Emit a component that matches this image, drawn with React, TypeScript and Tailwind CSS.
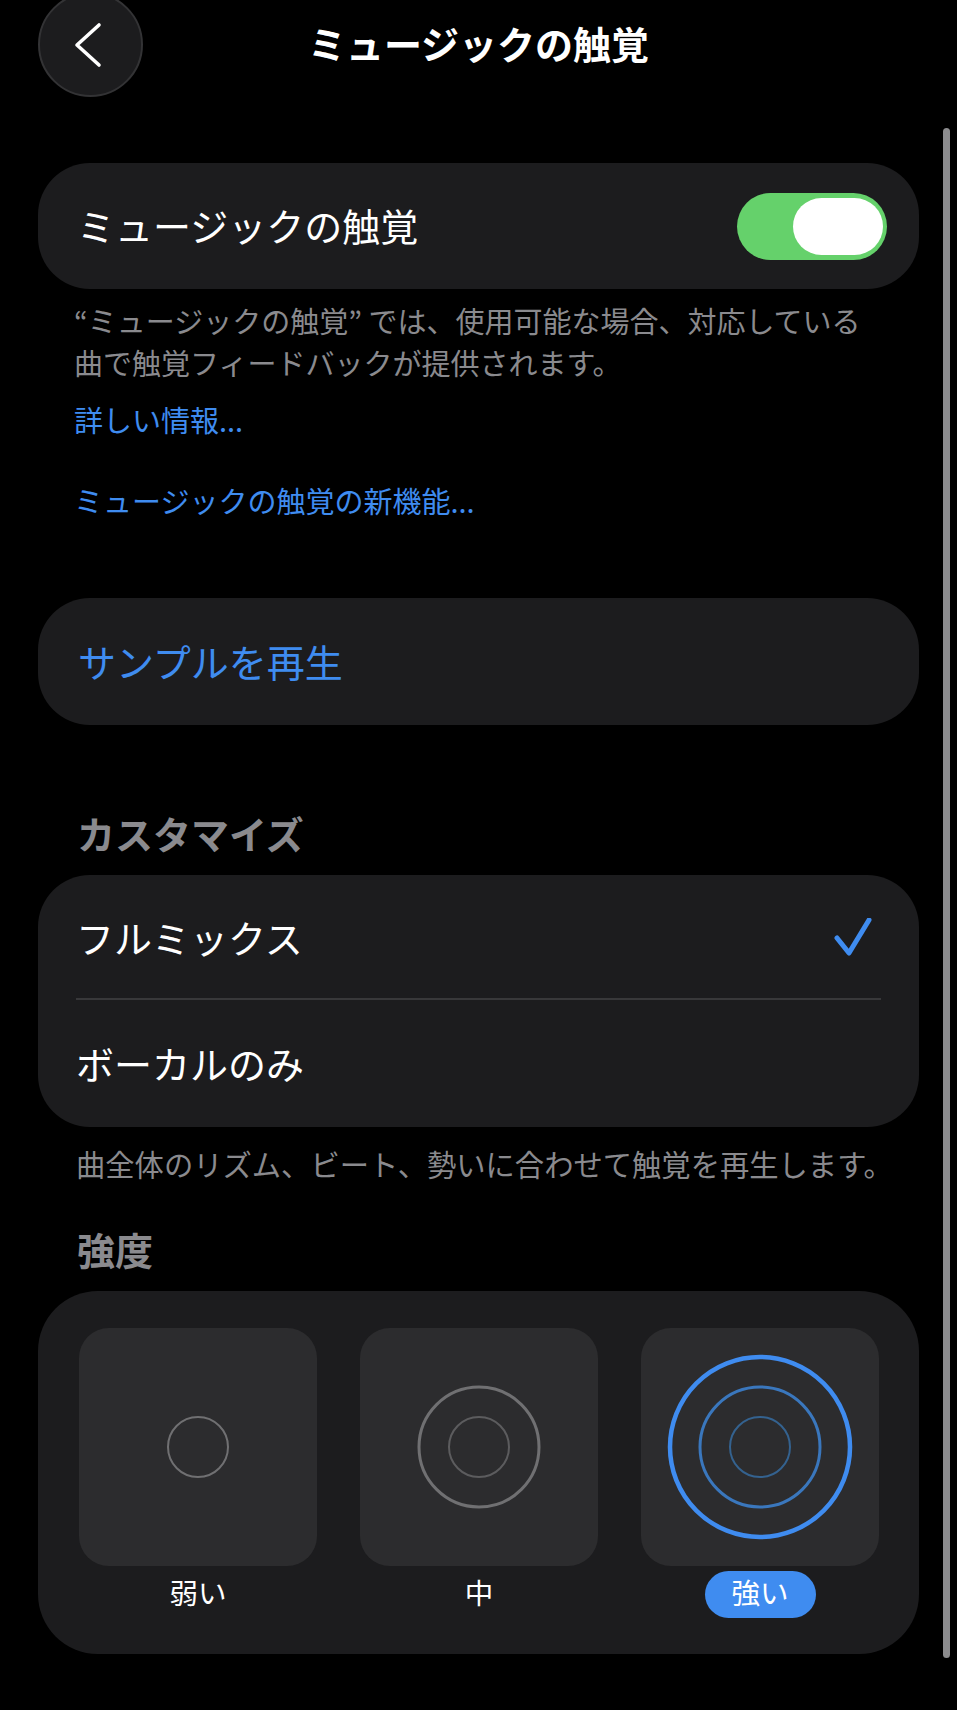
export default function App() {
  const sans = "font-['Noto_Sans_CJK_JP','Noto_Sans',sans-serif]";
  return (
    <div className={`relative h-[1710px] w-[957px] overflow-hidden bg-black px-[38px] text-white ${sans}`}>
      {/* scrollbar */}
      <div className="absolute left-[943px] top-[128px] h-[1530px] w-[7px] rounded-full bg-[#8c8c8e]" />

      {/* header */}
      <header className="relative -mt-[8px] flex h-[104px] items-center justify-center">
        <button className="absolute left-0 top-0 flex h-[105px] w-[105px] items-center justify-center rounded-full border-2 border-[#333335] bg-[#1c1c1e] pr-[5px]">
          <svg width="36" height="48" viewBox="0 0 36 48" fill="none">
            <path d="M30 4 L8 24 L30 44" transform="translate(-1 0)" stroke="#fff" strokeWidth="3.6" strokeLinecap="round" strokeLinejoin="round" />
          </svg>
        </button>
        <h1 className="pb-[2px] text-[38px] font-bold leading-[44px]">ミュージックの触覚</h1>
      </header>

      {/* toggle card */}
      <section className="mt-[67px] flex h-[126px] items-center justify-between rounded-[52px] bg-[#1c1c1e] pl-[39px] pr-[32px]">
        <span className="pb-[2px] text-[38px] leading-[44px]">ミュージックの触覚</span>
        <div className="flex h-[67px] w-[150px] items-center justify-end rounded-full bg-[#65d16b] pr-[4px]">
          <div className="h-[57px] w-[90px] rounded-full bg-white" />
        </div>
      </section>

      {/* description */}
      <p className="ml-[36px] mt-[10px] whitespace-nowrap text-[29px] leading-[42px] text-[#8a8a8e]">
        “ミュージックの触覚” では、使用可能な場合、対応している
        <br />
        曲で触覚フィードバックが提供されます。
      </p>
      <p className="ml-[36px] mt-[15px] text-[29px] leading-[42px] text-[#3f8cf0]">詳しい情報...</p>
      <p className="ml-[36px] mt-[39px] text-[29px] leading-[42px] text-[#3f8cf0]">ミュージックの触覚の新機能...</p>

      {/* sample */}
      <section className="mt-[77px] flex h-[127px] items-center rounded-[52px] bg-[#1c1c1e] pl-[40px]">
        <span className="pb-[2px] text-[38px] leading-[44px] text-[#3f8cf0]">サンプルを再生</span>
      </section>

      {/* customize */}
      <h2 className="ml-[39px] mt-[86px] text-[38px] font-bold leading-[44px] text-[#8a8a8e]">カスタマイズ</h2>
      <section className="mt-[20px] rounded-[52px] bg-[#1c1c1e] pl-[38px] pr-[38px]">
        <div className="flex h-[125px] items-center justify-between border-b-2 border-[#38383a] pr-[9px]">
          <span className="text-[38px] leading-[44px]">フルミックス</span>
          <svg width="38" height="38" viewBox="0 0 38 38" fill="none">
            <path d="M3 20 L15 35 L35 2" stroke="#3f8cf0" strokeWidth="5" strokeLinecap="round" strokeLinejoin="round" />
          </svg>
        </div>
        <div className="flex h-[127px] items-center pb-[2px]">
          <span className="text-[38px] leading-[44px]">ボーカルのみ</span>
        </div>
      </section>
      <p className="ml-[38px] mt-[15px] whitespace-nowrap text-[29.3px] leading-[43px] text-[#8a8a8e]">
        曲全体のリズム、ビート、勢いに合わせて触覚を再生します。
      </p>

      {/* intensity */}
      <h2 className="ml-[39px] mt-[42px] text-[38px] font-bold leading-[44px] text-[#8a8a8e]">強度</h2>
      <section className="mt-[20px] grid h-[363px] grid-cols-3 gap-x-[43px] rounded-[60px] bg-[#1c1c1e] pl-[41px] pr-[40px] pt-[37px]">
        <div className="flex flex-col items-center">
          <div className="flex h-[238px] w-full items-center justify-center rounded-[30px] bg-[#2c2c2e]">
            <svg width="190" height="190" viewBox="0 0 190 190" fill="none">
              <circle cx="95" cy="95" r="30" stroke="#707072" strokeWidth="2" />
            </svg>
          </div>
          <div className="mt-[5px] flex h-[47px] items-center justify-center pb-[5px] text-[28.5px] leading-[40px]">弱い</div>
        </div>
        <div className="flex flex-col items-center">
          <div className="flex h-[238px] w-full items-center justify-center rounded-[30px] bg-[#2c2c2e]">
            <svg width="190" height="190" viewBox="0 0 190 190" fill="none">
              <circle cx="95" cy="95" r="30" stroke="#5c5c5e" strokeWidth="2" />
              <circle cx="95" cy="95" r="60" stroke="#707072" strokeWidth="3" />
            </svg>
          </div>
          <div className="mt-[5px] flex h-[47px] items-center justify-center pb-[5px] text-[28.5px] leading-[40px]">中</div>
        </div>
        <div className="flex flex-col items-center">
          <div className="flex h-[238px] w-full items-center justify-center rounded-[30px] bg-[#2c2c2e]">
            <svg width="190" height="190" viewBox="0 0 190 190" fill="none">
              <circle cx="95" cy="95" r="30" stroke="#34628f" strokeWidth="2" />
              <circle cx="95" cy="95" r="60" stroke="#3a77bd" strokeWidth="3" />
              <circle cx="95" cy="95" r="90" stroke="#3f8cf0" strokeWidth="4.5" />
            </svg>
          </div>
          <div className="mt-[5px] flex h-[47px] w-[111px] items-center justify-center rounded-full bg-[#3f8cf0] pb-[5px] text-[28.5px] leading-[40px]">強い</div>
        </div>
      </section>
    </div>
  );
}
